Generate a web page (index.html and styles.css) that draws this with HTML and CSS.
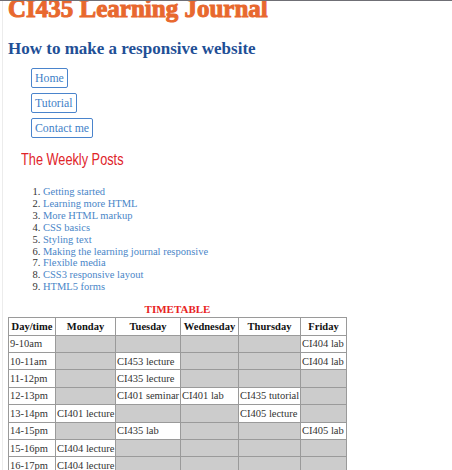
FILE: index.html
```html
<!DOCTYPE html>
<html>
<head>
<meta charset="utf-8">
<link rel="stylesheet" href="styles.css">
</head>
<body>
<div class="page">
  <header class="masthead">
    <h1 class="title">CI435 Learning Journal</h1>
    <h2 class="subtitle">How to make a responsive website</h2>
  </header>
  <nav class="nav">
    <a class="nav-btn" href="#">Home</a>
    <a class="nav-btn" href="#">Tutorial</a>
    <a class="nav-btn" href="#">Contact me</a>
  </nav>
  <h3 class="posts-title">The Weekly Posts</h3>
  <ol class="posts">
    <li><a href="#">Getting started</a></li>
    <li><a href="#">Learning more HTML</a></li>
    <li><a href="#">More HTML markup</a></li>
    <li><a href="#">CSS basics</a></li>
    <li><a href="#">Styling text</a></li>
    <li><a href="#">Making the learning journal responsive</a></li>
    <li><a href="#">Flexible media</a></li>
    <li><a href="#">CSS3 responsive layout</a></li>
    <li><a href="#">HTML5 forms</a></li>
  </ol>
  <table class="timetable">
    <caption class="caption">TIMETABLE</caption>
    <colgroup>
      <col class="c-time">
      <col class="c-mon">
      <col class="c-tue">
      <col class="c-wed">
      <col class="c-thu">
      <col class="c-fri">
    </colgroup>
    <thead>
      <tr><th>Day/time</th><th>Monday</th><th>Tuesday</th><th>Wednesday</th><th>Thursday</th><th>Friday</th></tr>
    </thead>
    <tbody>
      <tr><td>9-10am</td><td class="off"></td><td class="off"></td><td class="off"></td><td class="off"></td><td>CI404 lab</td></tr>
      <tr><td>10-11am</td><td class="off"></td><td>CI453 lecture</td><td class="off"></td><td class="off"></td><td>CI404 lab</td></tr>
      <tr><td>11-12pm</td><td class="off"></td><td>CI435 lecture</td><td class="off"></td><td class="off"></td><td class="off"></td></tr>
      <tr><td>12-13pm</td><td class="off"></td><td>CI401 seminar</td><td>CI401 lab</td><td>CI435 tutorial</td><td class="off"></td></tr>
      <tr><td>13-14pm</td><td>CI401 lecture</td><td class="off"></td><td class="off"></td><td>CI405 lecture</td><td class="off"></td></tr>
      <tr><td>14-15pm</td><td class="off"></td><td>CI435 lab</td><td class="off"></td><td class="off"></td><td>CI405 lab</td></tr>
      <tr><td>15-16pm</td><td>CI404 lecture</td><td class="off"></td><td class="off"></td><td class="off"></td><td class="off"></td></tr>
      <tr><td>16-17pm</td><td>CI404 lecture</td><td class="off"></td><td class="off"></td><td class="off"></td><td class="off"></td></tr>
    </tbody>
  </table>
</div>
</body>
</html>
```
FILE: styles.css
```css
html, body {
  margin: 0;
  padding: 0;
  background: #ffffff;
}
body {
  border-top: 1px solid #6f6f75;
  font-family: "Liberation Serif", "Times New Roman", serif;
  color: #333333;
}
.page {
  border-left: 1px solid #ececec;
  margin-left: 2px;
  padding: 0 0 0 5px;
}
.masthead {
  display: flex;
  flex-direction: column;
}
.title {
  margin: -7px 0 0 0;
  font-size: 25px;
  line-height: 30px;
  font-weight: 700;
  color: #e8682e;
  -webkit-text-stroke: 1px #e8682e;
}
.subtitle {
  margin: 14px 0 0 0;
  font-size: 17px;
  line-height: 22px;
  font-weight: 700;
  color: #1f4f96;
}
.nav {
  display: flex;
  flex-direction: column;
  align-items: flex-start;
  gap: 5px;
  margin: 8px 0 0 23px;
}
.nav-btn {
  display: block;
  border: 1px solid #4a84cc;
  border-radius: 2px;
  padding: 0 3px;
  font-size: 11.8px;
  line-height: 18px;
  color: #3f7fc8;
  text-decoration: none;
}
.posts-title {
  margin: 12px 0 0 13px;
  font-family: "Liberation Sans", "Arial", sans-serif;
  font-weight: normal;
  font-size: 17px;
  line-height: 20px;
  color: #e0242a;
  transform: scaleX(0.75);
  transform-origin: left center;
}
.posts {
  margin: 16px 0 0 0;
  padding-left: 35px;
  font-size: 10.5px;
  line-height: 11.9px;
  color: #333;
}
.posts a {
  color: #4a86c8;
  text-decoration: none;
}
.timetable {
  margin-top: 8px;
  border-collapse: collapse;
  table-layout: fixed;
  width: 338px;
  font-size: 10.5px;
  color: #333;
}
.c-time { width: 47px; }
.c-mon { width: 60px; }
.c-tue { width: 65px; }
.c-wed { width: 58px; }
.c-thu { width: 62px; }
.c-fri { width: 46px; }
.caption {
  font-weight: bold;
  color: #e8231f;
  font-size: 11px;
  line-height: 16px;
}
.timetable th, .timetable td {
  border: 1px solid #9a9a9a;
  height: 16.4px;
  padding: 0 1px;
  text-align: left;
  white-space: nowrap;
  overflow: hidden;
}
.timetable th {
  text-align: center;
  font-weight: bold;
  color: #111;
}
.timetable td.off {
  background: #cccccc;
}
```
